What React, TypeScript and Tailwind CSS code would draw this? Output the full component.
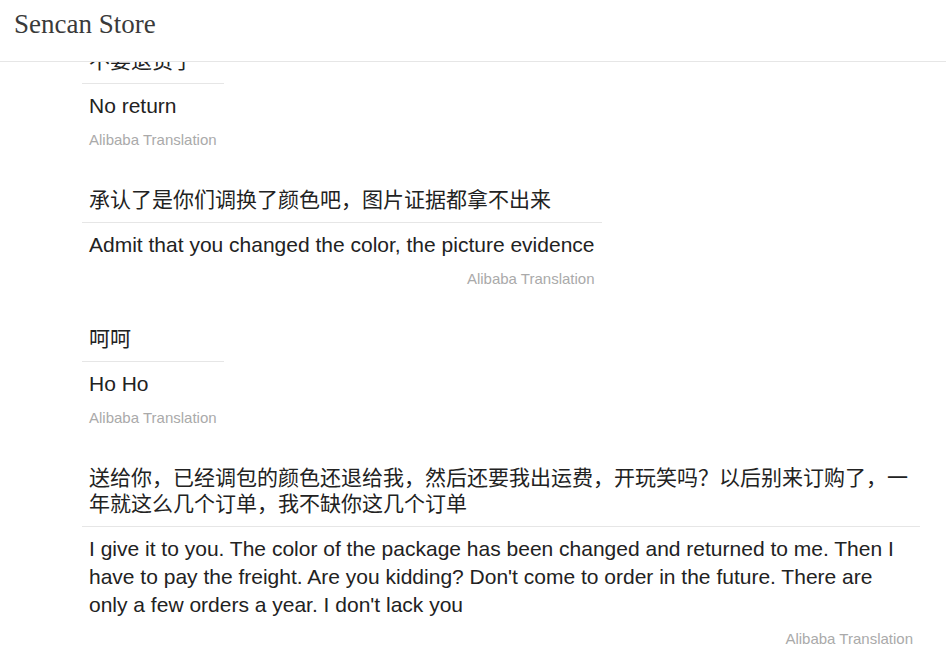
import React from "react";

type Msg = { zh: string; en: string };

const msgs: Msg[] = [
  { zh: "不要退货了", en: "No return" },
  { zh: "承认了是你们调换了颜色吧，图片证据都拿不出来", en: "Admit that you changed the color, the picture evidence" },
  { zh: "呵呵", en: "Ho Ho" },
  {
    zh: "送给你，已经调包的颜色还退给我，然后还要我出运费，开玩笑吗？以后别来订购了，一年就这么几个订单，我不缺你这几个订单",
    en: "I give it to you. The color of the package has been changed and returned to me. Then I have to pay the freight. Are you kidding? Don't come to order in the future. There are only a few orders a year. I don't lack you",
  },
];

function Bubble({ m, first }: { m: Msg; first?: boolean }) {
  return (
    <div className={first ? "-mt-[14px]" : "mt-[37px]"}>
      <div className="inline-block max-w-[838px] align-top">
        <div className="px-[7px] pb-[9px] text-[21px] leading-[26px] text-[#222]">{m.zh}</div>
        <div className="border-t border-[#e6e6e6] px-[7px] pt-[8px] text-[21px] leading-[28px] text-[#222]">{m.en}</div>
        <div className="mt-[10px] px-[7px] text-right text-[15px] leading-[20px] text-[#aaaaaa]">Alibaba Translation</div>
      </div>
    </div>
  );
}

export default function App() {
  return (
    <div
      className="flex h-[654px] w-[946px] flex-col overflow-hidden bg-white"
      style={{ fontFamily: '"Liberation Sans", "Noto Sans CJK SC", sans-serif' }}
    >
      <header className="h-[62px] shrink-0 border-b border-[#e6e6e6] bg-white px-[14px] pt-[8px]">
        <div className="text-[27px] leading-[32px] text-[#3a3a3a]" style={{ fontFamily: '"Liberation Serif", serif' }}>
          Sencan Store
        </div>
      </header>
      <main className="flex-1 overflow-hidden pl-[82px]">
        {msgs.map((m, i) => (
          <Bubble key={i} m={m} first={i === 0} />
        ))}
      </main>
    </div>
  );
}
